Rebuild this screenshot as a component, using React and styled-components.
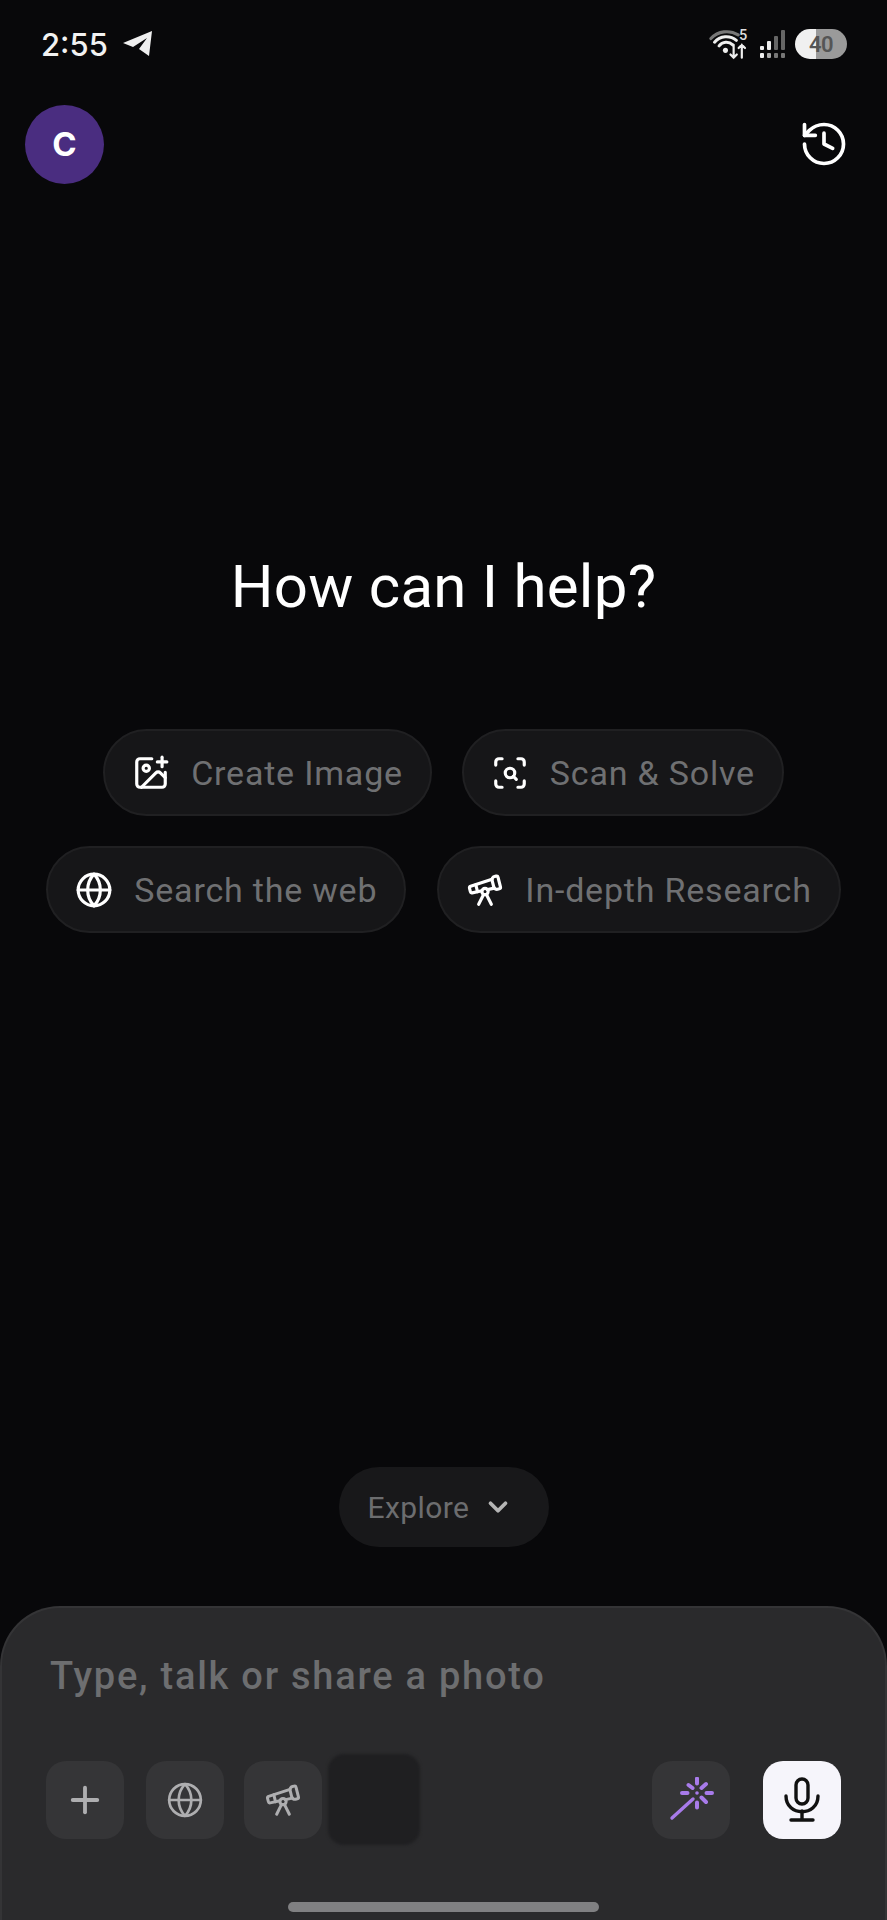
import React from "react";
import styled, { createGlobalStyle } from "styled-components";
import { Globe, History, ImagePlus, Plus, ScanSearch, Telescope, ChevronDown } from "lucide-react";

const Global = createGlobalStyle`
  html, body { margin: 0; padding: 0; background: #08080a; }
  * { box-sizing: border-box; }
`;

const Page = styled.div`
  width: 887px;
  height: 1920px;
  overflow: hidden;
  background: #08080a;
  color: #fff;
  font-family: Roboto, "Noto Sans", sans-serif;
  display: flex;
  flex-direction: column;
`;

const StatusBar = styled.div`
  height: 84px;
  padding: 4px 40px 0 41px;
  display: flex;
  align-items: center;
  justify-content: space-between;
`;
const StatusLeft = styled.div`
  display: flex;
  align-items: center;
  gap: 14px;
`;
const Time = styled.span`
  font-family: Inter, Roboto, sans-serif;
  font-size: 31px;
  font-weight: 500;
  color: #f2f2f2;
  line-height: 1;
`;
const StatusRight = styled.div`
  display: flex;
  align-items: center;
  gap: 8px;
`;
const Battery = styled.div`
  width: 52px;
  height: 30px;
  border-radius: 15px;
  background: linear-gradient(90deg, #f0f0f0 0 40%, #9a9a9a 40% 100%);
  color: #555;
  font-size: 22px;
  font-weight: 600;
  display: flex;
  align-items: center;
  justify-content: center;
  letter-spacing: -0.5px;
`;

const Header = styled.header`
  height: 78px;
  margin-top: 21px;
  padding: 0 37px 0 25px;
  display: flex;
  align-items: center;
  justify-content: space-between;
`;
const Avatar = styled.div`
  width: 79px;
  height: 79px;
  border-radius: 50%;
  background: #4a2d80;
  display: flex;
  align-items: center;
  justify-content: center;
  font-size: 33px;
  font-weight: 700;
  font-family: Inter, sans-serif;
`;

const Hero = styled.main`
  flex: 1;
  display: flex;
  flex-direction: column;
  align-items: center;
  padding-top: 368px;
`;
const Title = styled.h1`
  margin: 0;
  font-size: 60px;
  line-height: 72px;
  font-weight: 400;
  letter-spacing: 0.25px;
`;
const ChipRow = styled.div`
  display: flex;
  gap: ${(p) => p.$gap}px;
  margin-top: ${(p) => p.$top}px;
  justify-content: center;
`;
const Chip = styled.button`
  height: 87px;
  padding: 0 27px 0 27px;
  display: flex;
  align-items: center;
  gap: 21px;
  border-radius: 44px;
  border: 2px solid #202022;
  background: #161618;
  color: #6f7072;
  font-family: inherit;
  font-size: 34px;
  letter-spacing: 0.8px;
  svg { color: #fff; flex: none; }
`;
const Explore = styled.button`
  margin-top: auto;
  margin-bottom: 59px;
  width: 210px;
  height: 80px;
  border-radius: 40px;
  border: none;
  background: #18181a;
  color: #6c6d6f;
  font-family: inherit;
  font-size: 30px;
  letter-spacing: 0.4px;
  display: flex;
  align-items: center;
  justify-content: center;
  gap: 14px;
  padding: 0 6px 0 0;
  svg { color: #b5b5b5; }
`;

const Composer = styled.section`
  height: 314px;
  background: #2a2a2c;
  border: 2px solid #343436;
  border-bottom: none;
  border-radius: 60px 60px 0 0;
  padding: 47px 44px 0 48px;
  display: flex;
  flex-direction: column;
`;
const Placeholder = styled.div`
  font-size: 38px;
  line-height: 42px;
  font-weight: 500;
  letter-spacing: 1.75px;
  color: #6d6e70;
`;
const Toolbar = styled.div`
  margin-top: 57px;
  display: flex;
  align-items: center;
  margin-left: -4px;
`;
const Tool = styled.button`
  width: 78px;
  height: 78px;
  flex: none;
  border: none;
  padding: 0;
  border-radius: 20px;
  background: ${(p) => (p.$light ? "#f6f5fb" : "#353537")};
  color: ${(p) => (p.$light ? "#111" : p.$accent ? "#a87bea" : "#aeaeb0")};
  display: flex;
  align-items: center;
  justify-content: center;
  margin-left: ${(p) => p.$ml || 0}px;
`;
const Ghost = styled.div`
  width: 92px;
  height: 91px;
  margin-left: 6px;
  flex: none;
  border-radius: 16px;
  background: #1f1f21;
  filter: blur(1.5px);
`;
const Spacer = styled.div`
  flex: 1;
`;
const HomeBar = styled.div`
  width: 311px;
  height: 10px;
  border-radius: 5px;
  background: #808082;
  margin: 57px 0 0 238px;
`;

const TelegramIcon = () => (
  <svg width="32" height="28" viewBox="0 0 32 28">
    <path d="M1 13 L30 1 L27 26 L17 19 L25 8 L11 17 Z" fill="#efefef" />
  </svg>
);

const WifiIcon = () => (
  <svg width="42" height="40" viewBox="0 -5 46 44" fill="none" strokeLinecap="round">
    <path d="M2 11 A24 24 0 0 1 32 7" stroke="#777" strokeWidth="3.4" />
    <path d="M6 15 A17 17 0 0 1 30 13" stroke="#eee" strokeWidth="3.4" />
    <path d="M11 19 A10 10 0 0 1 26 18" stroke="#eee" strokeWidth="3.4" />
    <circle cx="18" cy="24" r="2.8" fill="#eee" />
    <path d="M27 18 V32 M23.5 28.5 L27 32 L30.5 28.5 M36 32 V18 M32.5 21.5 L36 18 L39.5 21.5" stroke="#eee" strokeWidth="2.4" />
    <text x="33" y="13" fill="#ddd" fontSize="16" fontFamily="Roboto, sans-serif" fontWeight="500">5</text>
  </svg>
);

const SignalIcon = () => (
  <svg width="28" height="30" viewBox="0 0 28 30" fill="none">
    <rect x="1" y="17" width="4" height="4" rx="1" fill="#eee" />
    <rect x="8" y="12" width="4" height="9" rx="1" fill="#eee" />
    <rect x="15" y="7" width="4" height="14" rx="1" fill="#666" />
    <rect x="22" y="1" width="4" height="20" rx="1" fill="#666" />
    <rect x="1" y="24" width="4" height="5" rx="1" fill="#eee" />
    <rect x="8" y="24" width="4" height="5" rx="1" fill="#aaa" />
    <rect x="15" y="24" width="4" height="5" rx="1" fill="#777" />
    <rect x="22" y="24" width="4" height="5" rx="1" fill="#777" />
  </svg>
);

const WandIcon = () => (
  <svg width="46" height="46" viewBox="0 0 46 46" fill="none" stroke="currentColor" strokeLinecap="round">
    <path d="M4 41 L25 22" strokeWidth="3.4" />
    <path
      d="M29 1.5 V6.5 M29 25.5 V30.5 M14 16 H19.5 M38.5 16 H44 M20.5 8 L24.5 11 M33.5 11 L38 7 M33.5 20.5 L38 25"
      strokeWidth="4"
    />
    <circle cx="29" cy="16" r="1.8" fill="currentColor" stroke="none" />
  </svg>
);

const MicIcon = () => (
  <svg width="38" height="46" viewBox="0 0 38 46" fill="none" stroke="currentColor" strokeWidth="3.4" strokeLinecap="round">
    <rect x="13" y="2" width="12" height="25" rx="6" />
    <path d="M3 19 C3 40 35 40 35 19" />
    <path d="M19 34 V42 M8 43 H30" />
  </svg>
);

export default function App() {
  return (
    <Page>
      <Global />
      <StatusBar>
        <StatusLeft>
          <Time>2:55</Time>
          <TelegramIcon />
        </StatusLeft>
        <StatusRight>
          <WifiIcon />
          <SignalIcon />
          <Battery>40</Battery>
        </StatusRight>
      </StatusBar>
      <Header>
        <Avatar>C</Avatar>
        <History size={52} strokeWidth={1.7} color="#fff" />
      </Header>
      <Hero>
        <Title>How can I help?</Title>
        <ChipRow $gap={30} $top={106}>
          <Chip>
            <ImagePlus size={38} strokeWidth={2} />
            Create Image
          </Chip>
          <Chip>
            <ScanSearch size={38} strokeWidth={2} />
            Scan &amp; Solve
          </Chip>
        </ChipRow>
        <ChipRow $gap={31} $top={30}>
          <Chip>
            <Globe size={38} strokeWidth={2} />
            Search the web
          </Chip>
          <Chip>
            <Telescope size={38} strokeWidth={2} />
            In-depth Research
          </Chip>
        </ChipRow>
        <Explore>
          Explore
          <ChevronDown size={30} strokeWidth={3} />
        </Explore>
      </Hero>
      <Composer>
        <Placeholder>Type, talk or share a photo</Placeholder>
        <Toolbar>
          <Tool>
            <Plus size={42} strokeWidth={2.2} />
          </Tool>
          <Tool $ml={22}>
            <Globe size={38} strokeWidth={1.7} />
          </Tool>
          <Tool $ml={20}>
            <Telescope size={38} strokeWidth={1.9} />
          </Tool>
          <Ghost />
          <Spacer />
          <Tool $accent>
            <WandIcon />
          </Tool>
          <Tool $light $ml={33}>
            <MicIcon />
          </Tool>
        </Toolbar>
        <HomeBar />
      </Composer>
    </Page>
  );
}
